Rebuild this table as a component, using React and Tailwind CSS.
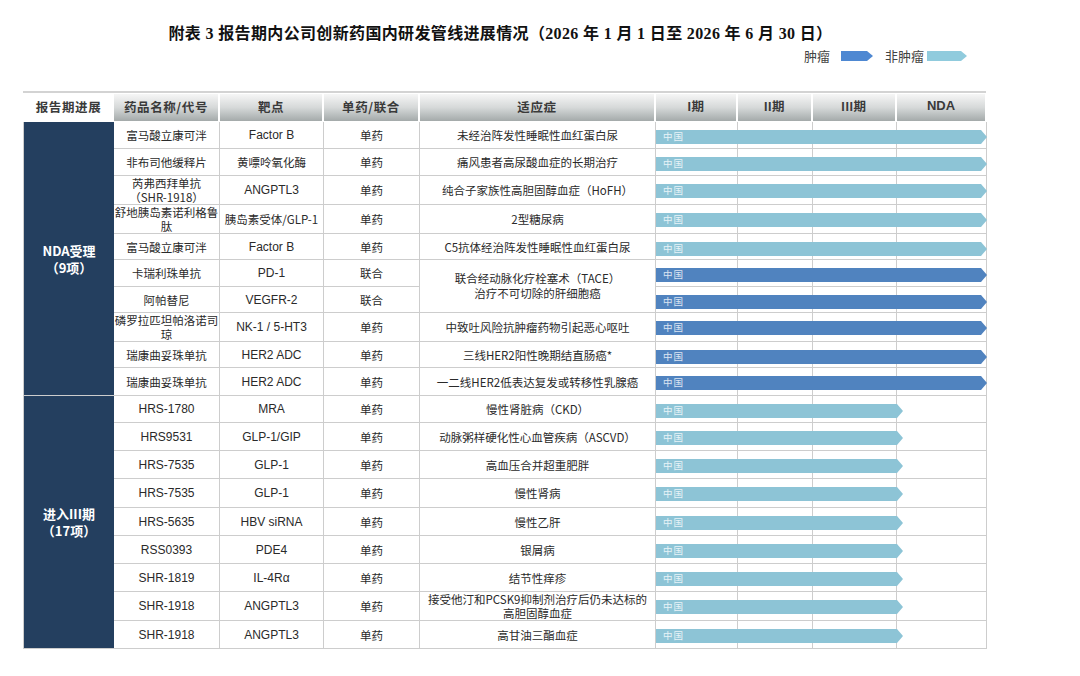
import React from "react";

const CJK = "font-['Noto_Sans_CJK_SC',sans-serif]";
const LAT = "font-['Liberation_Sans','Noto_Sans_CJK_SC',sans-serif]";
const LINE = "border-[#cdcdcd]";

const nda = [
  { name: "富马酸立康可泮", target: "Factor B", tl: true, combo: "单药", ind: ["未经治阵发性睡眠性血红蛋白尿"], tumor: false },
  { name: "非布司他缓释片", target: "黄嘌呤氧化酶", tl: false, combo: "单药", ind: ["痛风患者高尿酸血症的长期治疗"], tumor: false },
  { name: ["芮弗西拜单抗", "（SHR-1918）"], target: "ANGPTL3", tl: true, combo: "单药", ind: ["纯合子家族性高胆固醇血症（HoFH）"], tumor: false },
  { name: ["舒地胰岛素诺利格鲁", "肽"], target: "胰岛素受体/GLP-1", tl: false, combo: "单药", ind: ["2型糖尿病"], tumor: false },
  { name: "富马酸立康可泮", target: "Factor B", tl: true, combo: "单药", ind: ["C5抗体经治阵发性睡眠性血红蛋白尿"], tumor: false },
  { name: "卡瑞利珠单抗", target: "PD-1", tl: true, combo: "联合", ind: ["联合经动脉化疗栓塞术（TACE）", "治疗不可切除的肝细胞癌"], span: true, tumor: true },
  { name: "阿帕替尼", target: "VEGFR-2", tl: true, combo: "联合", ind: null, tumor: true },
  { name: ["磷罗拉匹坦帕洛诺司", "琼"], target: "NK-1 / 5-HT3", tl: true, combo: "单药", ind: ["中致吐风险抗肿瘤药物引起恶心呕吐"], tumor: true },
  { name: "瑞康曲妥珠单抗", target: "HER2 ADC", tl: true, combo: "单药", ind: ["三线HER2阳性晚期结直肠癌*"], tumor: true },
  { name: "瑞康曲妥珠单抗", target: "HER2 ADC", tl: true, combo: "单药", ind: ["一二线HER2低表达复发或转移性乳腺癌"], tumor: true },
];

const p3 = [
  { name: "HRS-1780", nl: true, target: "MRA", tl: true, combo: "单药", ind: ["慢性肾脏病（CKD）"] },
  { name: "HRS9531", nl: true, target: "GLP-1/GIP", tl: true, combo: "单药", ind: ["动脉粥样硬化性心血管疾病（ASCVD）"] },
  { name: "HRS-7535", nl: true, target: "GLP-1", tl: true, combo: "单药", ind: ["高血压合并超重肥胖"] },
  { name: "HRS-7535", nl: true, target: "GLP-1", tl: true, combo: "单药", ind: ["慢性肾病"] },
  { name: "HRS-5635", nl: true, target: "HBV siRNA", tl: true, combo: "单药", ind: ["慢性乙肝"] },
  { name: "RSS0393", nl: true, target: "PDE4", tl: true, combo: "单药", ind: ["银屑病"] },
  { name: "SHR-1819", nl: true, target: "IL-4Rα", tl: true, combo: "单药", ind: ["结节性痒疹"] },
  { name: "SHR-1918", nl: true, target: "ANGPTL3", tl: true, combo: "单药", ind: ["接受他汀和PCSK9抑制剂治疗后仍未达标的", "高胆固醇血症"] },
  { name: "SHR-1918", nl: true, target: "ANGPTL3", tl: true, combo: "单药", ind: ["高甘油三酯血症"] },
];

function Bar({ tumor, full }) {
  return (
    <div
      className={`absolute left-0 top-[8px] h-[14px] flex items-center pl-[7px] [clip-path:polygon(0_0,calc(100%_-_6px)_0,100%_50%,calc(100%_-_6px)_100%,0_100%)] ${
        full ? "w-[331px]" : "w-[247px]"
      } ${tumor ? "bg-[#5083bf]" : "bg-[#8dc4d6]"}`}
    >
      <span className={`${CJK} text-[9.5px] leading-none text-white/80 tracking-[1px]`}>中国</span>
    </div>
  );
}

function CnText({ lines, leading = "leading-[14px]" }) {
  return (
    <div className={`${CJK} text-[11.5px] ${leading} text-[#2a2a2a] text-center whitespace-nowrap`}>
      {lines.map((l, i) => (
        <div key={i}>{l}</div>
      ))}
    </div>
  );
}

function Cell({ children, className = "" }) {
  return (
    <div className={`flex items-center justify-center border-r border-b ${LINE} ${className}`}>{children}</div>
  );
}

function Rows({ rows, full, tumorDefault }) {
  const out = [];
  rows.forEach((r, i) => {
    const nameLines = Array.isArray(r.name) ? r.name : [r.name];
    out.push(
      <Cell key={`n${i}`}>
        {r.nl ? (
          <span className={`${LAT} text-[12px] text-[#2a2a2a]`}>{r.name}</span>
        ) : (
          <CnText lines={nameLines} />
        )}
      </Cell>
    );
    out.push(
      <Cell key={`t${i}`}>
        {r.tl ? (
          <span className={`${LAT} text-[12px] text-[#2a2a2a] whitespace-nowrap`}>{r.target}</span>
        ) : (
          <CnText lines={[r.target]} />
        )}
      </Cell>
    );
    out.push(
      <Cell key={`c${i}`}>
        <CnText lines={[r.combo]} />
      </Cell>
    );
    if (r.ind) {
      out.push(
        <Cell key={`i${i}`} className={r.span ? "row-span-2" : ""}>
          <CnText lines={r.ind} leading={r.span ? "leading-[15px]" : "leading-[14px]"} />
        </Cell>
      );
    }
    out.push(
      <div key={`p${i}`} className={`relative grid grid-cols-[82px_75px_84px_90px] border-b ${LINE}`}>
        <div className={`border-r ${LINE}`} />
        <div className={`border-r ${LINE}`} />
        <div className={`border-r ${LINE}`} />
        <div className={`border-r ${LINE}`} />
        <Bar tumor={r.tumor ?? tumorDefault} full={full} />
      </div>
    );
  });
  return out;
}

function Legend() {
  return (
    <div className={`flex items-center justify-end h-[16px] pr-[19px] ${CJK} text-[13px] text-[#444]`}>
      <span>肿瘤</span>
      <div className="ml-[11px] w-[32px] h-[10px] bg-[#4e88d2] [clip-path:polygon(0_0,calc(100%_-_6px)_0,100%_50%,calc(100%_-_6px)_100%,0_100%)]" />
      <span className="ml-[12px]">非肿瘤</span>
      <div className="ml-[3px] w-[40px] h-[10px] bg-[#90cbdd] [clip-path:polygon(0_0,calc(100%_-_6px)_0,100%_50%,calc(100%_-_6px)_100%,0_100%)]" />
    </div>
  );
}

const HG = "bg-linear-to-b from-[#f6f6f6] via-[#d6d9d9] to-[#a4aaaa]";

function HeaderCell({ children, w, latin }) {
  return (
    <div className={`${w} h-full flex items-center justify-center border-r-2 border-white ${HG}`}>
      <span className={`${latin ? LAT : CJK} text-[12.5px] font-bold text-[#3a3a3a] tracking-[0.6px] whitespace-nowrap`}>
        {children}
      </span>
    </div>
  );
}

export default function App() {
  return (
    <div className="w-[1080px] h-[676px] bg-white overflow-hidden">
      <div className="pt-[22px] pl-[23px] w-[1000px]">
        <div className="w-[963px] h-[24px] flex items-center justify-center pr-[8px]">
          <span className={`font-['Liberation_Serif','Noto_Sans_CJK_SC',serif] text-[16px] font-bold text-[#111] whitespace-nowrap tracking-[0.35px]`}>
            附表 3 报告期内公司创新药国内研发管线进展情况（2026 年 1 月 1 日至 2026 年 6 月 30 日）
          </span>
        </div>
        <div className="mt-[2px] w-[963px]">
          <Legend />
        </div>
        <div className="mt-[27px] w-[963px] h-[2px] bg-[#d3d3d3]" />
        <div className="w-[963px] h-[29px] flex pt-[1px] pb-[1px]">
          <div className="w-[91px] h-full flex items-center justify-center">
            <span className={`${CJK} text-[12.5px] font-bold text-[#3a3a3a] tracking-[0.6px]`}>报告期进展</span>
          </div>
          <HeaderCell w="w-[106px]">药品名称/代号</HeaderCell>
          <HeaderCell w="w-[104px]">靶点</HeaderCell>
          <HeaderCell w="w-[96px]">单药/联合</HeaderCell>
          <HeaderCell w="w-[236px]">适应症</HeaderCell>
          <HeaderCell w="w-[82px]" latin>I期</HeaderCell>
          <HeaderCell w="w-[75px]" latin>II期</HeaderCell>
          <HeaderCell w="w-[84px]" latin>III期</HeaderCell>
          <div className={`w-[88px] h-full flex items-center justify-center ${HG}`}>
            <span className={`${LAT} text-[13px] font-bold text-[#3a3a3a] -mt-[3px]`}>NDA</span>
          </div>
        </div>
        <div className="grid w-[964px] grid-cols-[91px_106px_104px_96px_236px_331px] grid-rows-[27px_27px_29px_29px_26px_27px_26px_29px_26px_28px]">
          <div className={`row-span-10 bg-[#243f5f] border-l border-b ${LINE} flex flex-col items-center justify-center`}>
            <span className={`${CJK} text-[13px] font-bold text-white leading-[17px]`}>NDA受理</span>
            <span className={`${CJK} text-[13px] font-bold text-white leading-[17px]`}>（9项）</span>
          </div>
          <Rows rows={nda} full />
        </div>
        <div className="grid w-[964px] grid-cols-[91px_106px_104px_96px_236px_331px] grid-rows-[27px_28px_28px_29px_28px_28px_28px_29px_28px]">
          <div className={`row-span-9 bg-[#243f5f] border-l border-b ${LINE} flex flex-col items-center justify-center`}>
            <span className={`${CJK} text-[13px] font-bold text-white leading-[17px]`}>进入III期</span>
            <span className={`${CJK} text-[13px] font-bold text-white leading-[17px]`}>（17项）</span>
          </div>
          <Rows rows={p3} full={false} tumorDefault={false} />
        </div>
      </div>
    </div>
  );
}
